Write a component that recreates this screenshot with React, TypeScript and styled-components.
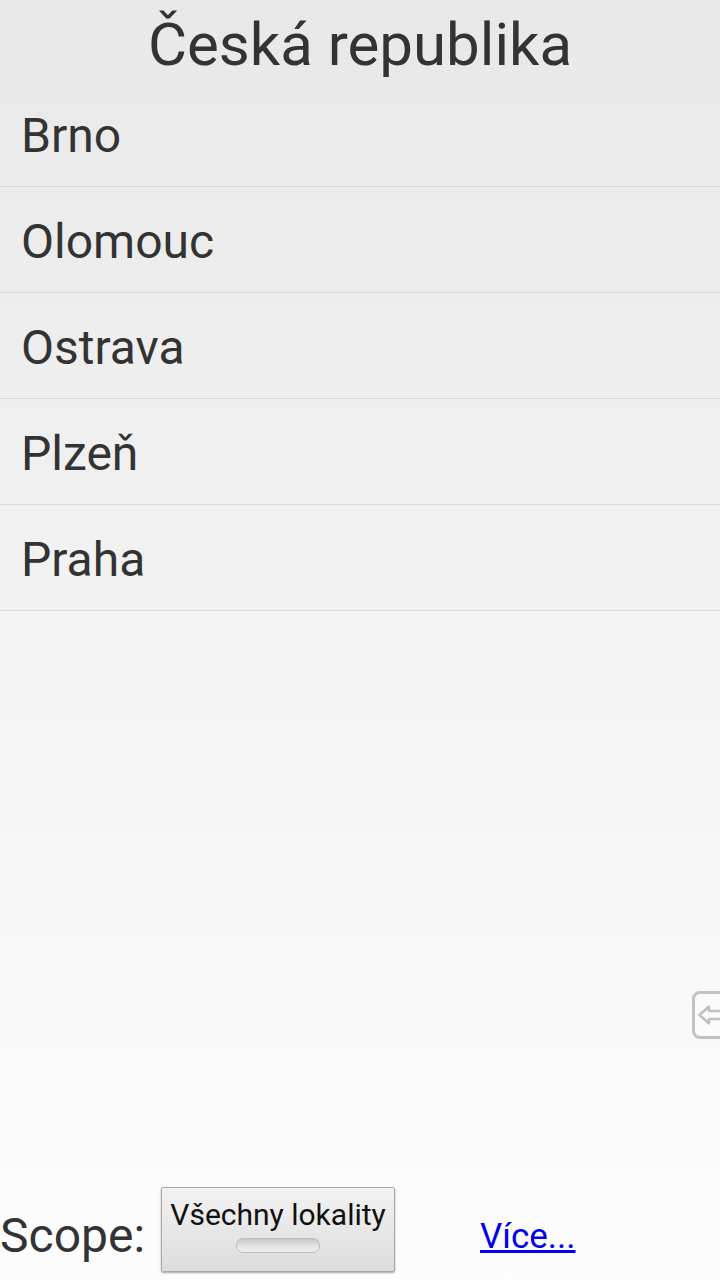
import React from "react";
import styled, { createGlobalStyle } from "styled-components";

const Global = createGlobalStyle`
  html, body { margin: 0; padding: 0; }
  body { font-family: Roboto, "Noto Sans", sans-serif; }
`;

const Screen = styled.div`
  position: relative;
  width: 720px;
  height: 1280px;
  overflow: hidden;
  display: flex;
  flex-direction: column;
  background: linear-gradient(to bottom, #e8e8e8 0%, #f3f3f3 50%, #fdfdfd 100%);
  color: #333333;
`;

const Title = styled.h1`
  margin: 0;
  height: 81px;
  display: flex;
  align-items: center;
  justify-content: center;
  font-size: 60px;
  font-weight: 400;
  color: #333333;
  line-height: 1;
  padding-top: 8px;
  box-sizing: border-box;
`;

const List = styled.ul`
  list-style: none;
  margin: 0;
  padding: 0;
`;

const Row = styled.li`
  height: 106px;
  box-sizing: border-box;
  border-bottom: 1px solid #d9d9d9;
  display: flex;
  align-items: center;
  padding-left: 21px;
  padding-top: 4px;
  font-size: 48px;
  color: #333333;
`;

const Spacer = styled.div`
  flex: 1;
`;

const Bottom = styled.div`
  display: flex;
  align-items: center;
  height: 84px;
  margin-bottom: 9px;
`;

const ScopeLabel = styled.span`
  font-size: 48px;
  color: #333333;
  padding-top: 12px;
  margin-right: 16px;
`;

const ToggleButton = styled.button`
  width: 234px;
  height: 85px;
  box-sizing: border-box;
  border: 1px solid #a8a8a8;
  border-radius: 2px;
  background: linear-gradient(to bottom, #f2f2f2 0%, #dcdcdc 100%);
  box-shadow: 0 1px 2px rgba(0, 0, 0, 0.35);
  display: flex;
  flex-direction: column;
  align-items: center;
  padding: 9px 0 0;
  font-family: Roboto, sans-serif;
  font-size: 30px;
  color: #111111;
`;

const Indicator = styled.span`
  margin-top: 6px;
  width: 82px;
  height: 13px;
  border-radius: 7px;
  background: linear-gradient(to bottom, #c8c8c8 0%, #e6e6e6 60%, #f0f0f0 100%);
  border: 1px solid #bdbdbd;
`;

const MoreLink = styled.a`
  margin-left: 85px;
  padding-top: 14px;
  font-size: 35px;
  color: #0000ee;
  text-decoration: underline;
`;

const EdgeHandle = styled.div`
  position: absolute;
  right: -10px;
  top: 991px;
  width: 38px;
  height: 48px;
  box-sizing: border-box;
  border: 3px solid #c2c2c2;
  border-radius: 8px;
  background: #fbfbfb;
  display: flex;
  align-items: center;
  padding-left: 3px;
  filter: blur(0.4px);
`;

const cities = ["Brno", "Olomouc", "Ostrava", "Plzeň", "Praha"];

export default function App() {
  return (
    <Screen>
      <Global />
      <Title>Česká republika</Title>
      <List>
        {cities.map((c) => (
          <Row key={c}>{c}</Row>
        ))}
      </List>
      <Spacer />
      <Bottom>
        <ScopeLabel>Scope:</ScopeLabel>
        <ToggleButton>
          Všechny lokality
          <Indicator />
        </ToggleButton>
        <MoreLink href="#">Více...</MoreLink>
      </Bottom>
      <EdgeHandle>
        <svg width="24" height="20" viewBox="0 0 24 20">
          <path d="M24 6 H11 V1.5 L1.5 10 L11 18.5 V14 H24" fill="none" stroke="#c0c0c0" strokeWidth="2.5" strokeLinejoin="round" />
        </svg>
      </EdgeHandle>
    </Screen>
  );
}
